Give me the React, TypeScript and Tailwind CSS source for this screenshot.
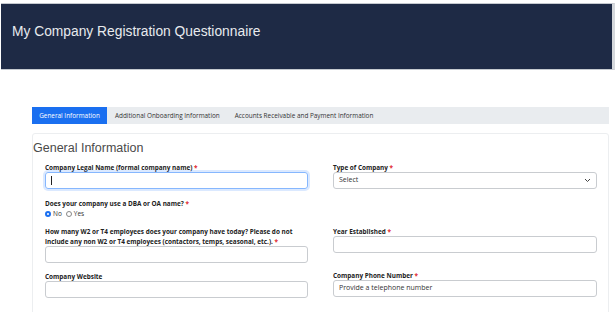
import React from "react";

const Req = () => <span className="text-[#e0242b]"> *</span>;

function Label({ children, req }: { children: React.ReactNode; req?: boolean }) {
  return (
    <div className="text-[6.4px] leading-[10px] font-bold text-[#222] whitespace-nowrap">
      {children}
      {req && <Req />}
    </div>
  );
}

function Input({ placeholder, focused, className = "" }: { placeholder?: string; focused?: boolean; className?: string }) {
  return (
    <div
      className={
        "h-[17px] rounded-[3px] border flex items-center px-[5px] text-[7px] text-[#333] " +
        (focused ? "border-[#86b7fe] shadow-[0_0_0_2px_rgba(13,110,253,0.15)] " : "border-[#c9ccd0] ") +
        className
      }
    >
      {focused && <span className="w-px h-[9px] bg-[#222]" />}
      {placeholder}
    </div>
  );
}

export default function App() {
  return (
    <div
      className="w-[615px] h-[312px] overflow-hidden bg-white"
      style={{ fontFamily: '"Open Sans", "Noto Sans", sans-serif' }}
    >
      <div className="pt-[3px]">
        <div className="ml-[1px] h-[67px] bg-[#1e2a45] border-y border-[#c5c9cf] border-r-[3px] border-r-[#d5d8dc] flex items-start">
          <div
            className="pl-[11px] pt-[18px] text-[13.8px] text-[#e8eaee]"
            style={{ fontFamily: '"Liberation Sans", Arial, sans-serif' }}
          >
            My Company Registration Questionnaire
          </div>
        </div>
      </div>

      <div className="ml-[32px] w-[577px] mt-[37px] h-[17px] bg-[#e9ecef] flex items-center text-[6.4px] text-[#333]">
        <div className="w-[75px] h-full bg-[#1a6ff0] text-white flex items-center justify-center">
          General Information
        </div>
        <div className="ml-[8px]">Additional Onboarding Information</div>
        <div className="ml-[15px]">Accounts Receivable and Payment Information</div>
      </div>

      <div className="ml-[32px] w-[577px] mt-[9px] border border-[#eceef0] rounded-[3px] h-[200px]">
        <div
          className="pl-[0px] pt-[7px] text-[12.5px] leading-[14px] text-[#4a4a4a]"
          style={{ fontFamily: '"Liberation Sans", Arial, sans-serif' }}
        >
          General Information
        </div>
        <div className="pl-[12px] pr-[11px] grid grid-cols-[263px_264px] gap-x-[25px] mt-[8px]">
          <div className="flex flex-col">
            <Label req>Company Legal Name (formal company name)</Label>
            <div className="-mt-[1px]">
              <Input focused />
            </div>
            <div className="mt-[10px]">
              <Label req>Does your company use a DBA or OA name?</Label>
              <div className="flex items-center text-[6.5px] text-[#333] leading-[9px] gap-[2px]">
                <span className="w-[6px] h-[6px] rounded-full border-[2px] border-[#1a6ff0] bg-white box-border" />
                <span>No</span>
                <span className="ml-[2px] w-[6px] h-[6px] rounded-full border border-[#888] bg-white" />
                <span>Yes</span>
              </div>
            </div>
            <div className="mt-[9px]">
              <Label>How many W2 or T4 employees does your company have today? Please do not</Label>
              <Label req>include any non W2 or T4 employees (contactors, temps, seasonal, etc.).</Label>
              <div className="-mt-[1px]">
                <Input />
              </div>
            </div>
            <div className="mt-[9px]">
              <Label>Company Website</Label>
              <div className="-mt-[1px]">
                <Input />
              </div>
            </div>
          </div>
          <div className="flex flex-col">
            <Label req>Type of Company</Label>
            <div className="-mt-[1px]">
              <div className="h-[17px] rounded-[3px] border border-[#c9ccd0] flex items-center justify-between px-[5px] text-[7px] text-[#333]">
                <span>Select</span>
                <svg width="7" height="5" viewBox="0 0 7 5">
                  <path d="M1 1l2.5 2.5L6 1" fill="none" stroke="#444" strokeWidth="1" />
                </svg>
              </div>
            </div>
            <div className="mt-[38px]">
              <Label req>Year Established</Label>
              <div className="-mt-[1px]">
                <Input />
              </div>
            </div>
            <div className="mt-[18px]">
              <Label req>Company Phone Number</Label>
              <div className="-mt-[1px]">
                <Input placeholder="Provide a telephone number" />
              </div>
            </div>
          </div>
        </div>
      </div>
    </div>
  );
}
